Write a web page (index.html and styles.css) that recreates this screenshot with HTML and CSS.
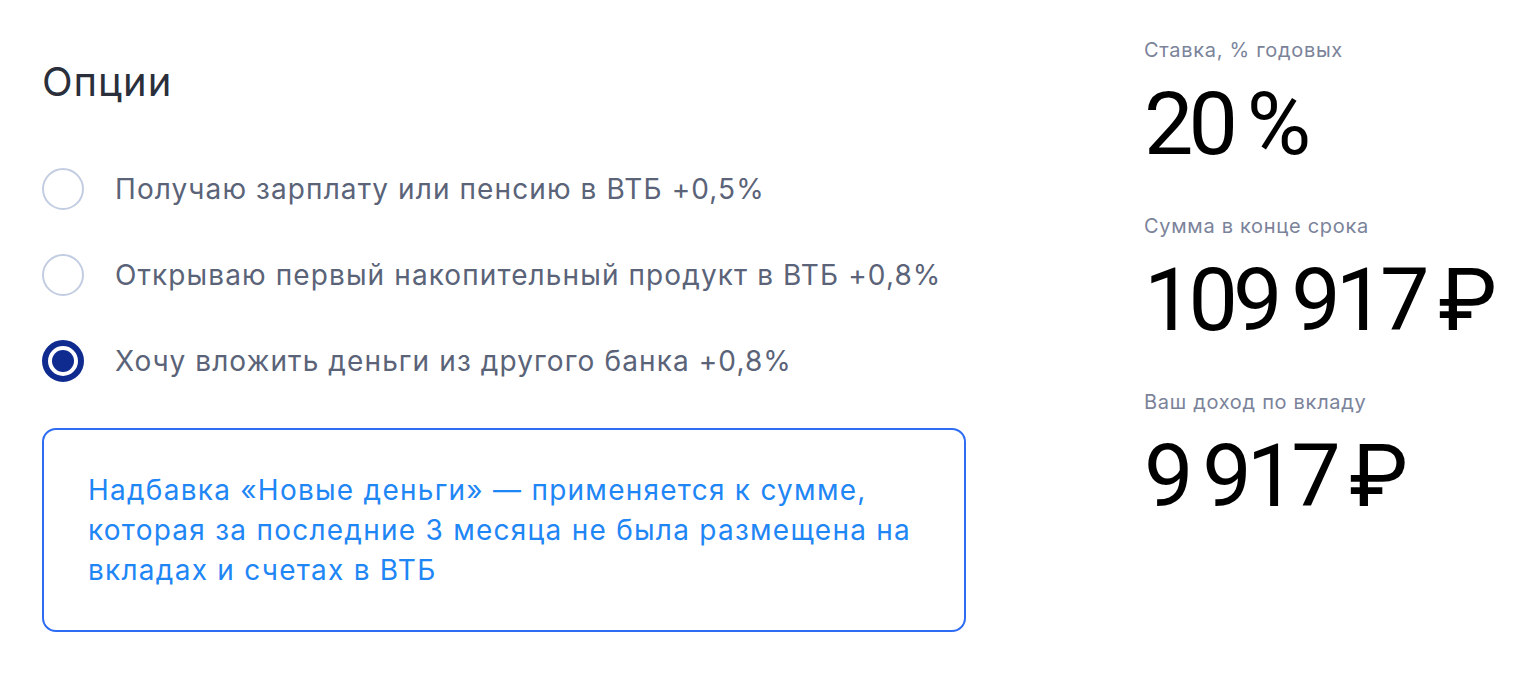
FILE: index.html
```html
<!DOCTYPE html>
<html lang="ru">
<head>
<meta charset="utf-8">
<title>Опции вклада</title>
<link rel="stylesheet" href="styles.css">
</head>
<body>
<div class="page">
  <section class="options">
    <h2 class="options-title">Опции</h2>
    <ul class="option-list">
      <li class="option"><span class="radio"></span><span class="option-text">Получаю зарплату или пенсию в ВТБ +0,5%</span></li>
      <li class="option"><span class="radio"></span><span class="option-text">Открываю первый накопительный продукт в ВТБ +0,8%</span></li>
      <li class="option"><span class="radio radio-checked"></span><span class="option-text">Хочу вложить деньги из другого банка +0,8%</span></li>
    </ul>
    <div class="note">
      <p class="note-text">Надбавка «Новые деньги» — применяется к сумме, которая за последние 3 месяца не была размещена на вкладах и счетах в ВТБ</p>
    </div>
  </section>
  <aside class="summary">
    <div class="metric">
      <div class="metric-label">Ставка, % годовых</div>
      <div class="metric-value">20 %</div>
    </div>
    <div class="metric">
      <div class="metric-label">Сумма в конце срока</div>
      <div class="metric-value">109 917 ₽</div>
    </div>
    <div class="metric">
      <div class="metric-label">Ваш доход по вкладу</div>
      <div class="metric-value">9 917 ₽</div>
    </div>
  </aside>
</div>
</body>
</html>
```
FILE: styles.css
```css
* {
  box-sizing: border-box;
}

body {
  margin: 0;
  background: #ffffff;
  font-family: Inter, "Noto Sans", sans-serif;
}

.page {
  display: flex;
  padding-left: 42px;
  gap: 178px;
}

.options {
  flex: none;
  width: 924px;
  padding-top: 58px;
}

.options-title {
  margin: 0;
  font-size: 40px;
  line-height: 48px;
  font-weight: 400;
  letter-spacing: 1px;
  color: #2a2f3b;
}

.option-list {
  list-style: none;
  margin: 62px 0 0;
  padding: 0;
  display: flex;
  flex-direction: column;
  gap: 44px;
}

.option {
  display: flex;
  align-items: center;
  gap: 31px;
  height: 42px;
}

.radio {
  flex: none;
  width: 42px;
  height: 42px;
  border-radius: 50%;
  border: 2px solid #c3cde2;
}

.radio-checked {
  border: 6px solid #0f2b8f;
  position: relative;
}

.radio-checked::after {
  content: "";
  position: absolute;
  inset: 4px;
  border-radius: 50%;
  background: #0f2b8f;
}

.option-text {
  font-size: 28px;
  line-height: 36px;
  letter-spacing: 1.1px;
  color: #5a6378;
}

.note {
  margin-top: 46px;
  border: 2px solid #2d6cf3;
  border-radius: 14px;
  padding: 40px 20px 40px 44px;
}

.note-text {
  margin: 0;
  font-size: 28px;
  line-height: 40px;
  letter-spacing: 1.25px;
  color: #1f86f5;
}

.summary {
  flex: none;
  padding-top: 36px;
  display: flex;
  flex-direction: column;
}

.metric {
  margin-bottom: 38px;
}

.metric-label {
  font-size: 20px;
  line-height: 28px;
  letter-spacing: 0.7px;
  color: #7b839a;
  margin-bottom: 10px;
}

.metric-value {
  font-family: Roboto, Inter, sans-serif;
  font-size: 88px;
  line-height: 100px;
  letter-spacing: -5px;
  word-spacing: -3px;
  color: #000000;
  white-space: nowrap;
}
```
